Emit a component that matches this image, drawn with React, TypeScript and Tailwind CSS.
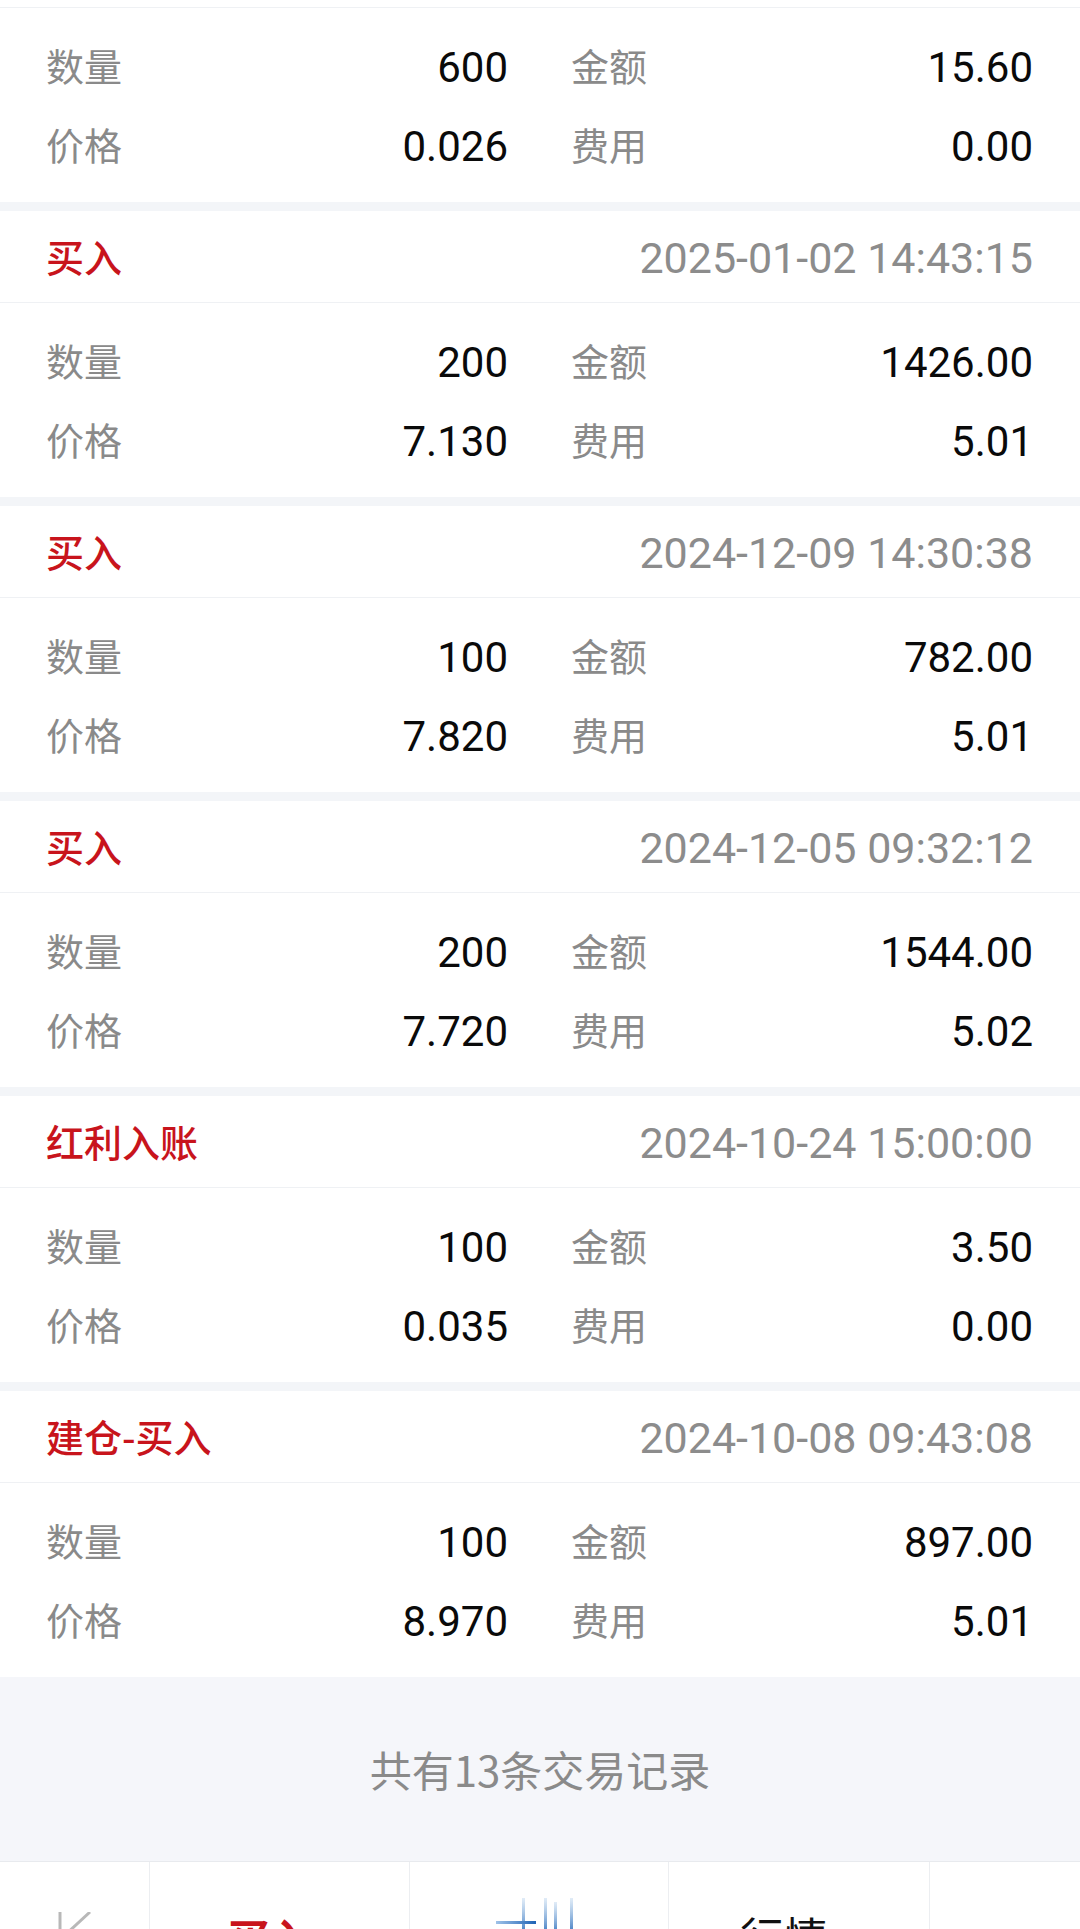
import React from "react";

type Rec = {
  title?: string;
  date?: string;
  qty: string;
  amt: string;
  price: string;
  fee: string;
};

const records: Rec[] = [
  { title: "买入", date: "2025-01-02 14:43:15", qty: "200", amt: "1426.00", price: "7.130", fee: "5.01" },
  { title: "买入", date: "2024-12-09 14:30:38", qty: "100", amt: "782.00", price: "7.820", fee: "5.01" },
  { title: "买入", date: "2024-12-05 09:32:12", qty: "200", amt: "1544.00", price: "7.720", fee: "5.02" },
  { title: "红利入账", date: "2024-10-24 15:00:00", qty: "100", amt: "3.50", price: "0.035", fee: "0.00" },
  { title: "建仓-买入", date: "2024-10-08 09:43:08", qty: "100", amt: "897.00", price: "8.970", fee: "5.01" },
];

const cjk = { fontFamily: '"Noto Sans CJK SC", "Noto Sans", sans-serif' };
const num = { fontFamily: 'Roboto, "Noto Sans CJK SC", sans-serif' };

function Cell({ label, value }: { label: string; value: string }) {
  return (
    <div className="flex items-center justify-between h-[79px]">
      <span className="text-[38px] leading-none text-[#8a8a8a] -mt-[6px]" style={cjk}>
        {label}
      </span>
      <span className="text-[42px] leading-none text-[#0a0a0a]" style={num}>
        {value}
      </span>
    </div>
  );
}

function Body({ r }: { r: Rec }) {
  return (
    <div className="h-[194px] pt-[20px] pl-[46px] pr-[47px] bg-white">
      <div className="grid grid-cols-2 gap-x-[63px]">
        <Cell label="数量" value={r.qty} />
        <Cell label="金额" value={r.amt} />
        <Cell label="价格" value={r.price} />
        <Cell label="费用" value={r.fee} />
      </div>
    </div>
  );
}

function Card({ r }: { r: Rec }) {
  return (
    <div>
      <div className="h-[9px] bg-[#f3f5f8]" />
      <div className="h-[92px] flex items-center justify-between pl-[46px] pr-[47px] border-b border-[#eff1f4] bg-white">
        <span className="text-[38px] leading-none font-medium text-[#c8141c] -mt-[2px]" style={cjk}>
          {r.title}
        </span>
        <span className="text-[43px] leading-none text-[#8c8c8c] mt-[3px]" style={num}>
          {r.date}
        </span>
      </div>
      <Body r={r} />
    </div>
  );
}

export default function App() {
  return (
    <div className="w-[1080px] h-[1929px] overflow-hidden bg-white relative">
      <div className="h-[8px] border-b border-[#eff1f4] bg-white" />
      <Body r={{ qty: "600", amt: "15.60", price: "0.026", fee: "0.00" }} />
      {records.map((r, i) => (
        <Card key={i} r={r} />
      ))}
      <div className="h-[184px] bg-[#f5f6fa] flex items-center justify-center">
        <span className="text-[42px] leading-none text-[#8a8a8a]" style={cjk}>
          共有13条交易记录
        </span>
      </div>
      <div className="h-[69px] border-t border-[#e8eaee] bg-white flex overflow-hidden">
        <div className="w-[150px] border-r border-[#eceef1] relative">
          <svg className="absolute left-[56px] top-[50px]" width="40" height="30" viewBox="0 0 40 30">
            <line x1="4" y1="0" x2="4" y2="30" stroke="#b8b8b8" strokeWidth="3" />
            <line x1="34" y1="0" x2="8" y2="24" stroke="#b8b8b8" strokeWidth="3" />
          </svg>
        </div>
        <div className="w-[260px] border-r border-[#eceef1] flex justify-center pt-[54px]">
          <span className="text-[43px] leading-none font-bold text-[#c8141c] ml-[-20px]" style={cjk}>
            买入
          </span>
        </div>
        <div className="w-[259px] border-r border-[#eceef1] relative">
          <svg className="absolute left-[80px] top-[36px]" width="100" height="40" viewBox="0 0 100 40">
            <defs>
              <linearGradient id="bl" x1="0" y1="0" x2="0" y2="1">
                <stop offset="0" stopColor="#6aa0d8" stopOpacity="0.2" />
                <stop offset="1" stopColor="#1f63b5" />
              </linearGradient>
              <linearGradient id="bh" x1="0" y1="0" x2="1" y2="0">
                <stop offset="0" stopColor="#9fc2e8" />
                <stop offset="1" stopColor="#1f63b5" />
              </linearGradient>
            </defs>
            <rect x="32" y="0" width="3" height="40" fill="url(#bl)" />
            <rect x="54" y="0" width="3" height="40" fill="url(#bl)" />
            <rect x="64" y="4" width="3" height="36" fill="url(#bl)" />
            <rect x="80" y="0" width="3" height="40" fill="url(#bl)" />
            <rect x="6" y="23" width="40" height="3" fill="url(#bh)" />
          </svg>
        </div>
        <div className="w-[261px] border-r border-[#eceef1] flex justify-center pt-[52px]">
          <span className="text-[44px] leading-none text-[#111111] mr-[30px]" style={cjk}>
            行情
          </span>
        </div>
        <div className="flex-1" />
      </div>
    </div>
  );
}
